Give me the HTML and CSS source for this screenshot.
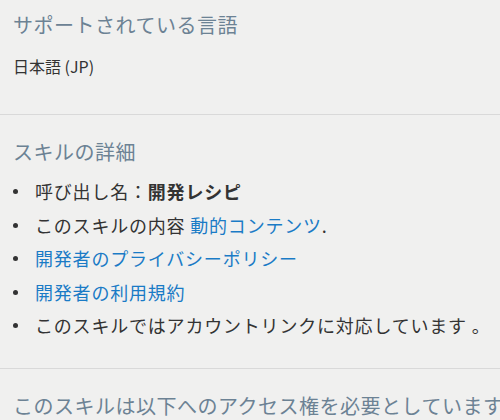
FILE: index.html
```html
<!DOCTYPE html>
<html lang="ja">
<head>
    <meta charset="UTF-8">
    <title>スキルの詳細</title>
    <link rel="stylesheet" href="styles.css">
</head>
<body>

<div class="section first">
    <h3>サポートされている言語</h3>
    <p class="lang">日本語 (JP)</p>
</div>

<div class="section">
    <h3>スキルの詳細</h3>
    <ul class="details">
        <li>呼び出し名：<strong>開発レシピ</strong></li>
        <li>このスキルの内容 <a href="#">動的コンテンツ</a>.</li>
        <li><a href="#">開発者のプライバシーポリシー</a></li>
        <li><a href="#">開発者の利用規約</a></li>
        <li>このスキルではアカウントリンクに対応しています 。</li>
    </ul>
</div>

<div class="section">
    <h3>このスキルは以下へのアクセス権を必要としています</h3>
</div>

</body>
</html>
```

FILE: styles.css
```css
body {
    margin: 0;
    background-color: #f0f0ef;
    font-family: "Noto Sans CJK JP", "Liberation Sans", sans-serif;
    color: #333333;
    overflow: hidden;
}
.section {
    padding: 23px 13px 30px;
    border-bottom: 1px solid #d9d9d9;
    white-space: nowrap;
}
.section.first {
    padding-top: 11px;
    padding-bottom: 36px;
}
h3 {
    margin: 0;
    font-size: 20px;
    line-height: 28px;
    letter-spacing: 0.5px;
    font-weight: normal;
    color: #6c8294;
}
.lang {
    margin: 15px 0 0;
    font-size: 16px;
    line-height: 24px;
}
.details {
    list-style: none;
    margin: 12px 0 0;
    padding: 0;
}
.details li {
    position: relative;
    height: 26px;
    padding-left: 22px;
    font-size: 18px;
    line-height: 26px;
    letter-spacing: 0.8px;
    margin-bottom: 7.5px;
}
.details li:last-child {
    margin-bottom: 0;
}
.details li::before {
    content: "";
    position: absolute;
    left: 0;
    top: 11px;
    width: 5px;
    height: 5px;
    border-radius: 50%;
    background-color: #333333;
}
.details strong {
    font-weight: bold;
}
.details a {
    color: #1a7bc6;
    text-decoration: none;
}
```
